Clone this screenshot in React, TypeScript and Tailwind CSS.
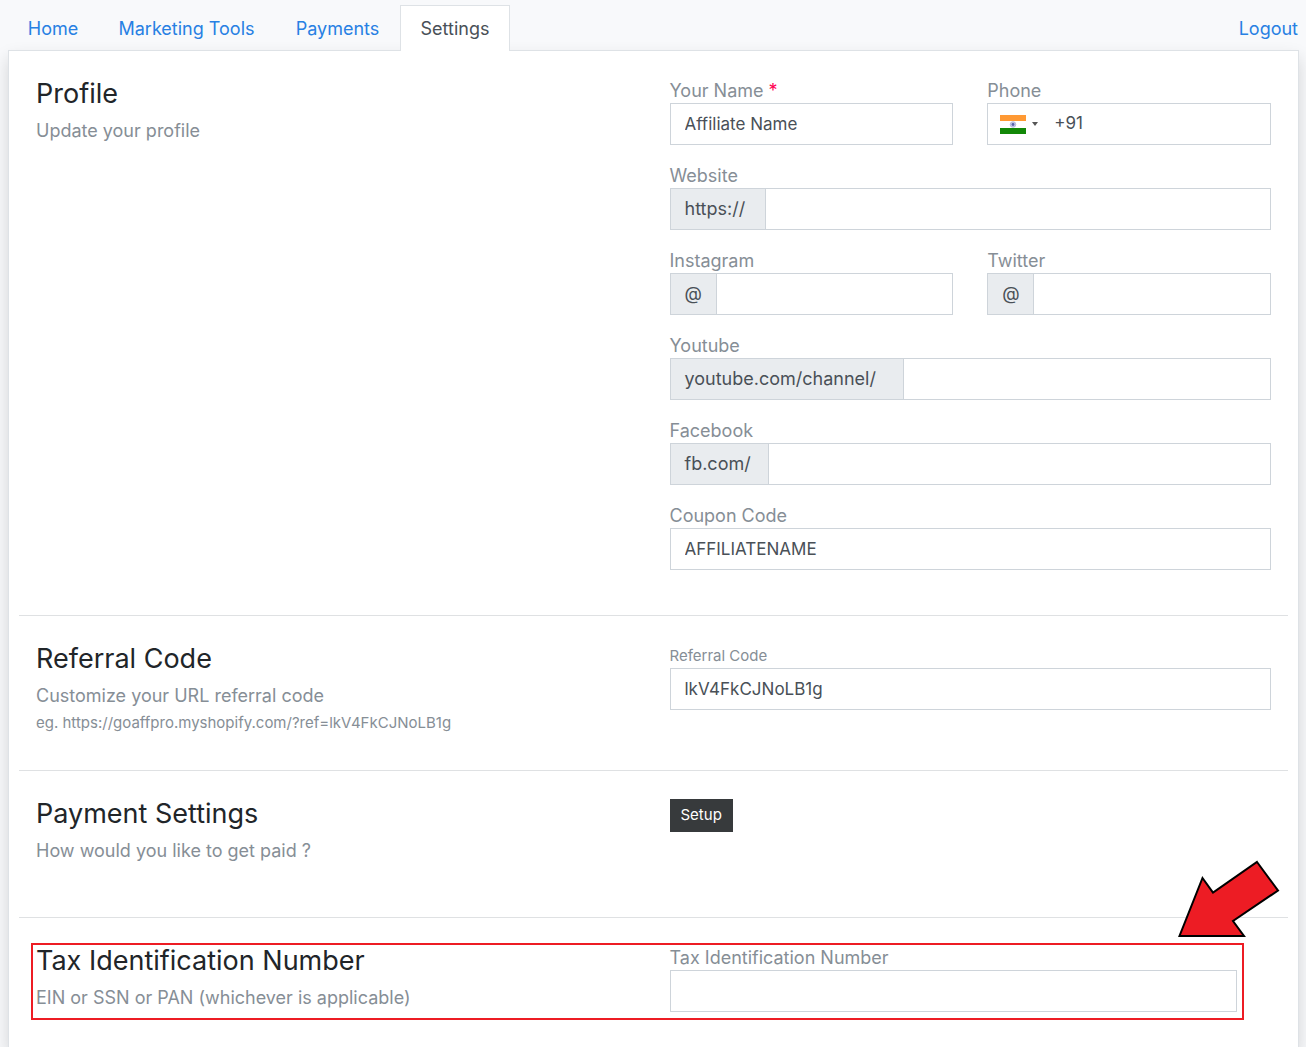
import { useState, type ReactNode } from 'react'

const inputClass =
  'h-[42px] w-full min-w-0 flex-1 border border-[#ced4da] bg-white px-3.5 text-[17px] text-[#495057] outline-none focus:border-[#80bdff]'

type FieldProps = {
  id: string
  label: string
  prefix?: string
  prefixWidth?: string
  value?: string
  required?: boolean
  small?: boolean
}

function Field({ id, label, prefix, prefixWidth = '', value = '', required, small }: FieldProps) {
  return (
    <div className="min-w-0">
      <label
        htmlFor={id}
        className={
          small
            ? 'block text-[15px] leading-6 text-[#868e96]'
            : 'block text-lg leading-6 text-[#868e96]'
        }
      >
        {label}
        {required && <span className="text-[#ff0052]"> *</span>}
      </label>
      <div className="flex">
        {prefix && (
          <span
            className={`flex items-center border border-r-0 border-[#ced4da] bg-[#e9ecef] pl-3.5 text-lg text-[#495057] ${prefixWidth}`}
          >
            {prefix}
          </span>
        )}
        <input id={id} type="text" defaultValue={value} className={inputClass} />
      </div>
    </div>
  )
}

function IndiaFlag() {
  return (
    <svg width="26" height="19" viewBox="0 0 26 19" aria-hidden="true">
      <rect width="26" height="19" fill="#fff" />
      <rect width="26" height="6" fill="#ff9933" />
      <rect y="13" width="26" height="6" fill="#128807" />
      <circle cx="13" cy="9.5" r="2.8" fill="#c5c8e6" stroke="#a9aedb" strokeWidth="0.8" />
      <circle cx="13" cy="9.5" r="1.4" fill="#5660ab" />
    </svg>
  )
}

function PhoneField() {
  return (
    <div className="min-w-0">
      <label htmlFor="phone" className="block text-lg leading-6 text-[#868e96]">
        Phone
      </label>
      <div className="flex h-[42px] border border-[#ced4da] bg-white">
        <button type="button" aria-label="Country" className="flex items-center gap-1.5 pl-3">
          <IndiaFlag />
          <svg width="6" height="4" viewBox="0 0 6 4" aria-hidden="true">
            <path d="M0 0h6L3 4z" fill="#555" />
          </svg>
        </button>
        <input
          id="phone"
          type="tel"
          defaultValue="+91"
          className="w-full min-w-0 flex-1 pl-4 text-[17px] text-[#495057] outline-none"
        />
      </div>
    </div>
  )
}

type SectionProps = {
  title: string
  text: string
  note?: string
  className: string
  children: ReactNode
}

function Section({ title, text, note, className, children }: SectionProps) {
  return (
    <section className={`relative grid grid-cols-2 pt-7 ${className}`}>
      <div className="px-[17px]">
        <h2 className="text-[27px] leading-[30px] text-[#212529]">{title}</h2>
        <p className="mt-2 text-lg leading-[27px] text-[#868e96]">{text}</p>
        {note && <p className="text-[15px] leading-[27px] text-[#868e96]">{note}</p>}
      </div>
      <div className="pr-[17px] pl-4">{children}</div>
    </section>
  )
}

const tabs = [
  { name: 'Home', width: 'w-[90px]' },
  { name: 'Marketing Tools', width: 'w-[177px]' },
  { name: 'Payments', width: 'w-[125px]' },
  { name: 'Settings', width: 'w-[110px]' },
]

export default function App() {
  const [active, setActive] = useState('Settings')

  return (
    <div className="flex min-h-screen flex-col bg-[#f8f9fb] pt-[5px] pr-[7px] pl-2 font-['Inter','Liberation_Sans',sans-serif]">
      <nav className="relative z-10 -mb-px flex items-end text-lg">
        {tabs.map(({ name, width }) => (
          <a
            key={name}
            href="#"
            onClick={() => setActive(name)}
            className={`flex h-[46px] items-center justify-center border border-b-0 ${width} ${
              name === active
                ? 'border-[#dee2e6] bg-white text-[#495057]'
                : 'border-transparent text-[#2780e3]'
            }`}
          >
            {name}
          </a>
        ))}
        <a
          href="#"
          className="ml-auto flex h-[46px] items-center border border-b-0 border-transparent text-[#2780e3]"
        >
          Logout
        </a>
      </nav>

      <main className="flex-1 border border-b-0 border-[#dee2e6] bg-white px-2.5 shadow-[0_8px_16px_rgba(0,0,0,0.15)]">
        <Section title="Profile" text="Update your profile" className="pb-[45px]">
          <div className="flex flex-col gap-[19px]">
            <div className="grid grid-cols-2 gap-[34px]">
              <Field id="name" label="Your Name" value="Affiliate Name" required />
              <PhoneField />
            </div>
            <Field id="website" label="Website" prefix="https://" prefixWidth="w-[95px]" />
            <div className="grid grid-cols-2 gap-[34px]">
              <Field id="instagram" label="Instagram" prefix="@" prefixWidth="w-[46px]" />
              <Field id="twitter" label="Twitter" prefix="@" prefixWidth="w-[46px]" />
            </div>
            <Field
              id="youtube"
              label="Youtube"
              prefix="youtube.com/channel/"
              prefixWidth="w-[233px]"
            />
            <Field id="facebook" label="Facebook" prefix="fb.com/" prefixWidth="w-[98px]" />
            <Field id="coupon" label="Coupon Code" value="AFFILIATENAME" />
          </div>
        </Section>

        <hr className="border-[#dfe1e3]" />
        <Section
          title="Referral Code"
          text="Customize your URL referral code"
          note="eg. https://goaffpro.myshopify.com/?ref=lkV4FkCJNoLB1g"
          className="pb-[34px]"
        >
          <Field id="referral" label="Referral Code" value="lkV4FkCJNoLB1g" small />
        </Section>

        <hr className="border-[#dfe1e3]" />
        <Section
          title="Payment Settings"
          text="How would you like to get paid ?"
          className="pb-[53px]"
        >
          <button type="button" className="h-[33px] bg-[#373a3c] px-[11px] text-[15px] text-white">
            Setup
          </button>
        </Section>

        <hr className="border-[#dfe1e3]" />
        <Section
          title="Tax Identification Number"
          text="EIN or SSN or PAN (whichever is applicable)"
          className="pb-[34px]"
        >
          <div className="pr-[34px]">
            <Field id="tax" label="Tax Identification Number" />
          </div>
          <div className="pointer-events-none absolute top-[25px] right-11 left-3 h-[77px] border-2 border-[#ed1c24]" />
          <svg
            className="pointer-events-none absolute -top-[58px] right-2"
            width="103"
            height="80"
            viewBox="0 0 103 80"
            aria-hidden="true"
          >
            <path
              d="M80 2 101 30.5 56 61 67 76H2.500L25.500 18 36 32.500z"
              fill="#ed1c24"
              stroke="#000"
              strokeWidth="2"
            />
          </svg>
        </Section>
      </main>
    </div>
  )
}
